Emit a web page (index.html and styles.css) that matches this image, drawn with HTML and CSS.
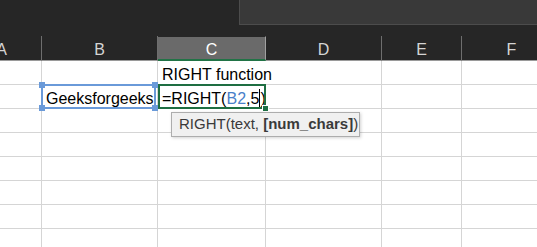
FILE: index.html
```html
<!DOCTYPE html>
<html lang="en">
<head>
    <meta charset="UTF-8">
    <meta name="viewport" content="width=device-width, initial-scale=1.0">
    <title>RIGHT function</title>
    <link rel="stylesheet" href="styles.css">
</head>
<body>
    <div class="top">
        <div class="fbar"></div>
    </div>
    <div class="sheet">
        <!-- 列标题 -->
        <div class="hd">A</div>
        <div class="hd">B</div>
        <div class="hd on">C</div>
        <div class="hd">D</div>
        <div class="hd">E</div>
        <div class="hd">F</div>

        <!-- 第1行 -->
        <div class="c"></div>
        <div class="c"></div>
        <div class="c spill"><span>RIGHT function</span></div>
        <div class="c"></div>
        <div class="c"></div>
        <div class="c"></div>

        <!-- 第2行 -->
        <div class="c"></div>
        <div class="c ref">
            <span>Geeksforgeeks</span>
            <i class="h tl"></i><i class="h tr"></i><i class="h bl"></i><i class="h br"></i>
        </div>
        <div class="c edit">
            <span>=RIGHT(<b class="blue">B2</b>,5<i class="caret"></i>)</span>
            <i class="fill"></i>
            <div class="tip">RIGHT(text, <b>[num_chars]</b>)</div>
        </div>
        <div class="c"></div>
        <div class="c"></div>
        <div class="c"></div>

        <div class="c"></div><div class="c"></div><div class="c"></div><div class="c"></div><div class="c"></div><div class="c"></div>
        <div class="c"></div><div class="c"></div><div class="c"></div><div class="c"></div><div class="c"></div><div class="c"></div>
        <div class="c"></div><div class="c"></div><div class="c"></div><div class="c"></div><div class="c"></div><div class="c"></div>
        <div class="c"></div><div class="c"></div><div class="c"></div><div class="c"></div><div class="c"></div><div class="c"></div>
        <div class="c"></div><div class="c"></div><div class="c"></div><div class="c"></div><div class="c"></div><div class="c"></div>
        <div class="c"></div><div class="c"></div><div class="c"></div><div class="c"></div><div class="c"></div><div class="c"></div>
    </div>
</body>
</html>
```
FILE: styles.css
```css
*{
    margin: 0;
    padding: 0;
    box-sizing: border-box;
}
body{
    width: 537px;
    height: 247px;
    overflow: hidden;
    background: #fff;
    font-family: "Liberation Sans", Arial, sans-serif;
}
.top{
    height: 36px;
    background: #262626;
    display: flex;
    justify-content: flex-end;
}
.fbar{
    width: 298px;
    height: 25px;
    background: #393939;
    border-left: 1px solid #4c4c4c;
    border-bottom: 1px solid #4c4c4c;
}
.sheet{
    display: grid;
    grid-template-columns: 80px 116px 108px 116px 80px 100px;
    grid-template-rows: 25px;
    grid-auto-rows: 24px;
    margin-left: -38px;
}
.hd{
    background: #262626;
    color: #d4d4d4;
    font-size: 16px;
    line-height: 22px;
    padding-top: 3px;
    text-align: center;
    border-right: 1px solid #6e6e6e;
    border-bottom: 1px solid #9a9a9a;
}
.hd.on{
    background: #6a6a6a;
    color: #fff;
    border-top: 1px solid #262626;
    border-right-color: #a0a0a0;
    border-bottom: 2px solid #217346;
    padding-top: 2px;
}
.c{
    position: relative;
    display: flex;
    align-items: flex-end;
    padding-left: 4px;
    font-size: 16px;
    line-height: 19px;
    white-space: nowrap;
    color: #000;
    border-right: 1px solid #d5d5d5;
    border-bottom: 1px solid #d5d5d5;
}
.c.spill{
    border-right-color: transparent;
}
.c b{
    font-weight: normal;
}
.c .blue{
    color: #4a80c9;
}
.caret{
    display: inline-block;
    width: 1px;
    height: 18px;
    background: #000;
    vertical-align: -3px;
}
/* 引用区域 蓝框 */
.ref::after{
    content: "";
    position: absolute;
    left: -1px;
    top: -1px;
    right: 1px;
    bottom: -1px;
    border: 2px solid #6a9ad9;
}
.h{
    position: absolute;
    width: 6px;
    height: 6px;
    background: #6a9ad9;
    z-index: 2;
}
.h.tl{ left: -3px; top: -3px; }
.h.tr{ right: -1px; top: -3px; }
.h.bl{ left: -3px; bottom: -3px; }
.h.br{ right: -1px; bottom: -3px; }
/* 编辑单元格 绿框 */
.edit::after{
    content: "";
    position: absolute;
    left: 0;
    top: -1px;
    right: -1px;
    bottom: -1px;
    border: 2px solid #1e6e42;
}
.fill{
    position: absolute;
    right: -4px;
    bottom: -4px;
    width: 7px;
    height: 7px;
    background: #1e6e42;
    border: 1px solid #fff;
    z-index: 2;
}
.tip{
    position: absolute;
    left: 13px;
    top: 27px;
    width: 189px;
    height: 25px;
    padding-left: 7px;
    background: #f0f0f0;
    border: 1px solid #adadad;
    box-shadow: 1px 1px 3px rgba(0, 0, 0, 0.18);
    font-size: 15px;
    line-height: 21px;
    color: #3a3a3a;
    z-index: 3;
}
.tip b{
    font-weight: bold;
}
```
